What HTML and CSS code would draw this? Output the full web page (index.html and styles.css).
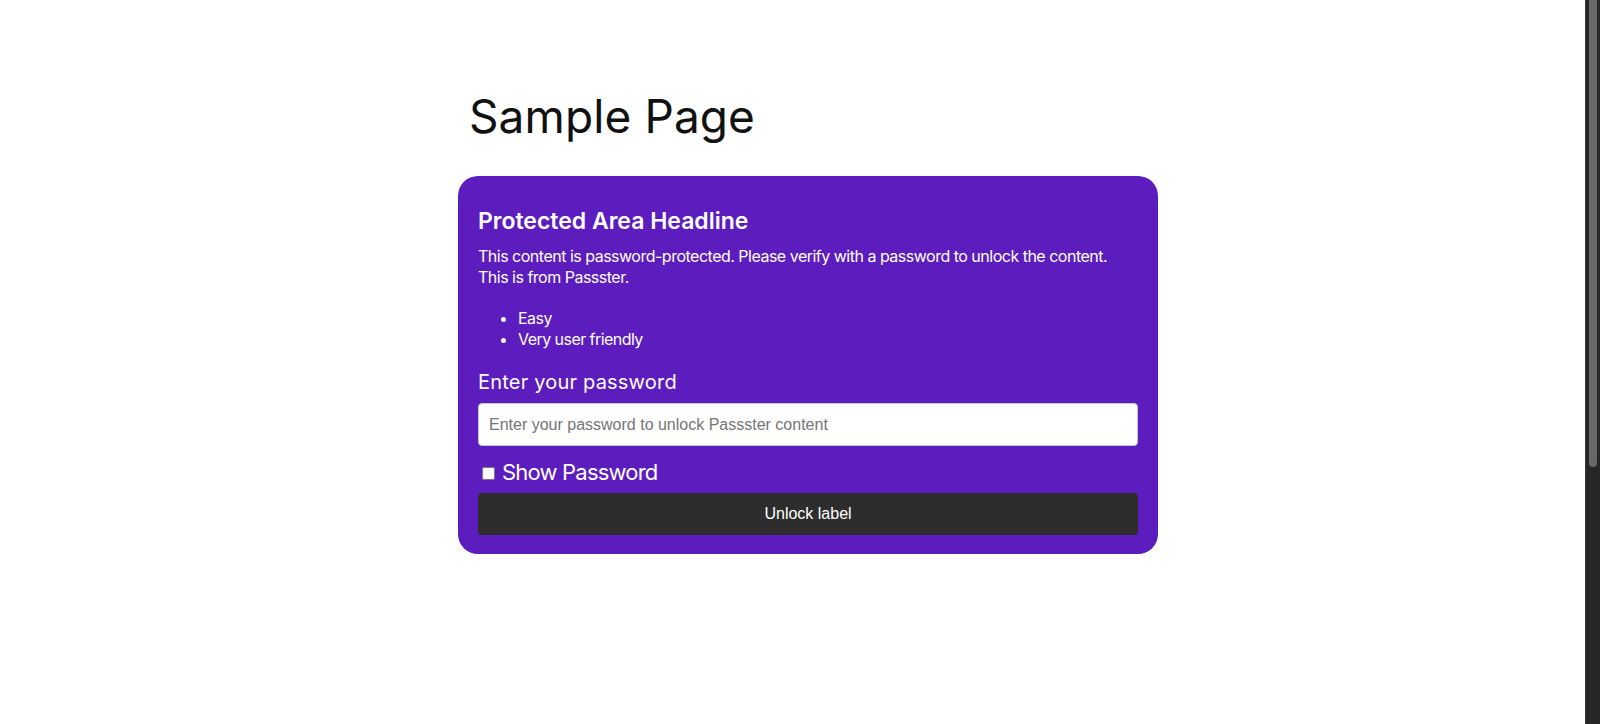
FILE: index.html
```html
<!DOCTYPE html>
<html lang="en">
<head>
<meta charset="utf-8">
<title>Sample Page</title>
<link rel="stylesheet" href="styles.css">
</head>
<body>
<div class="page">
  <main class="main">
    <div class="content">
      <h1 class="title">Sample Page</h1>
      <section class="card">
        <h4 class="card-title">Protected Area Headline</h4>
        <p class="card-text">This content is password-protected. Please verify with a password to unlock the content.<br>This is from Passster.</p>
        <ul class="card-list">
          <li>Easy</li>
          <li>Very user friendly</li>
        </ul>
        <label class="pw-label" for="pw">Enter your password</label>
        <input class="pw-input" id="pw" type="password" placeholder="Enter your password to unlock Passster content">
        <label class="show-pw"><input class="show-pw-box" type="checkbox"><span>Show Password</span></label>
        <button class="unlock" type="button">Unlock label</button>
      </section>
    </div>
  </main>
  <div class="scrollbar"><div class="scrollbar-thumb"></div></div>
</div>
</body>
</html>
```

FILE: styles.css
```css
* { box-sizing: border-box; }

html, body {
  margin: 0;
  padding: 0;
  height: 100%;
  overflow: hidden;
  background: #ffffff;
}

body {
  font-family: Inter, "Noto Sans", sans-serif;
  color: #111111;
}

.page {
  display: flex;
  height: 100vh;
}

.main {
  flex: 1;
  min-width: 0;
}

.content {
  width: 700px;
  margin-left: 458px;
  padding-top: 89px;
}

.title {
  margin: 0 0 32px 0;
  padding-left: 11px;
  font-size: 46px;
  line-height: 55px;
  font-weight: 400;
  color: #111111;
  letter-spacing: 0.1px;
}

.card {
  display: flex;
  flex-direction: column;
  background: #5c1cbe;
  border-radius: 20px;
  padding: 32px 20px 19px 20px;
  color: #ffffff;
}

.card-title {
  margin: 0 0 11px 0;
  font-size: 23px;
  line-height: 27px;
  font-weight: 600;
}

.card-text {
  margin: 0;
  font-size: 16px;
  line-height: 21px;
  letter-spacing: -0.5px;
  white-space: nowrap;
}

.card-list {
  margin: 20px 0 0 0;
  padding-left: 40px;
  font-size: 16px;
  line-height: 21px;
  letter-spacing: -0.55px;
}

.pw-label {
  margin-top: 20px;
  font-size: 20px;
  line-height: 24px;
  letter-spacing: 0.2px;
}

.pw-input {
  margin-top: 9px;
  height: 43px;
  width: 100%;
  padding: 0 10px;
  border: 1px solid #c8c8c8;
  border-radius: 4px;
  background: #ffffff;
  font-family: "Liberation Sans", Arial, sans-serif;
  font-size: 16px;
  color: #222222;
  outline: none;
}

.pw-input::placeholder {
  color: #757575;
}

.show-pw {
  margin-top: 13px;
  display: flex;
  align-items: center;
  gap: 4px;
  font-size: 22px;
  line-height: 26px;
  letter-spacing: -0.8px;
}

.show-pw-box {
  margin: 3px 3px 0 4px;
  width: 13px;
  height: 13px;
}

.unlock {
  margin-top: 8px;
  height: 42px;
  width: 100%;
  border: none;
  border-radius: 4px;
  background: #2d2d2d;
  color: #ffffff;
  font-family: "Liberation Sans", Arial, sans-serif;
  font-size: 16px;
  cursor: pointer;
}

.scrollbar {
  width: 15px;
  flex: none;
  height: 100vh;
  background: #262626;
  border-left: 1px solid #3a3a3a;
  padding: 0 3px 0 3px;
}

.scrollbar-thumb {
  height: 467px;
  width: 8px;
  background: #676767;
  border-radius: 0 0 4px 4px;
}
```
